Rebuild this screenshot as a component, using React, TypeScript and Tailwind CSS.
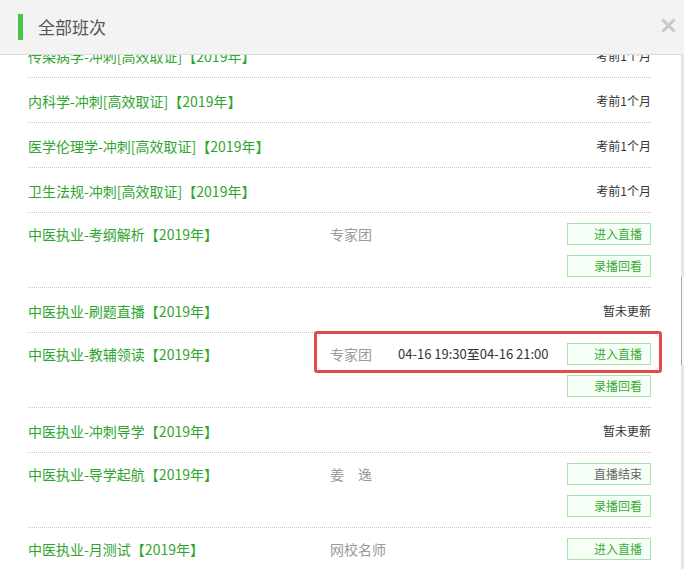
import React from 'react'

type Row = {
  title: string
  teacher?: string
  time?: string
  note?: string
  buttons?: string[]
}

const rows: Row[] = [
  { title: '传染病学-冲刺[高效取证]【2019年】', note: '考前1个月' },
  { title: '内科学-冲刺[高效取证]【2019年】', note: '考前1个月' },
  { title: '医学伦理学-冲刺[高效取证]【2019年】', note: '考前1个月' },
  { title: '卫生法规-冲刺[高效取证]【2019年】', note: '考前1个月' },
  { title: '中医执业-考纲解析【2019年】', teacher: '专家团', buttons: ['进入直播', '录播回看'] },
  { title: '中医执业-刷题直播【2019年】', note: '暂未更新' },
  {
    title: '中医执业-教辅领读【2019年】',
    teacher: '专家团',
    time: '04-16 19:30至04-16 21:00',
    buttons: ['进入直播', '录播回看'],
  },
  { title: '中医执业-冲刺导学【2019年】', note: '暂未更新' },
  { title: '中医执业-导学起航【2019年】', teacher: '姜　逸', buttons: ['直播结束', '录播回看'] },
  { title: '中医执业-月测试【2019年】', teacher: '网校名师', buttons: ['进入直播'] },
]

const LiveButton = ({ label }: { label: string }) => (
  <div
    className={`w-[84px] h-[22px] border border-[#a9e3a9] bg-[#f6fff6] text-right pr-[8px] text-[12px] leading-[20px] ${
      label === '直播结束' ? 'text-[#666]' : 'text-[#3aac3a]'
    }`}
  >
    {label}
  </div>
)

const ClassRow = ({ row }: { row: Row }) => {
  if (!row.buttons) {
    return (
      <div className="flex items-center h-[45px] border-b border-dotted border-[#c4c4c4]">
        <div className="flex-1 text-[14px] text-[#2ea52e] pt-[3px]">{row.title}</div>
        <div className="text-[12px] text-[#333] pt-[2px]">{row.note}</div>
      </div>
    )
  }
  return (
    <div className="flex items-start py-[10px] border-b border-dotted border-[#c4c4c4]">
      <div className="w-[302px] text-[14px] leading-[22px] text-[#2ea52e]">{row.title}</div>
      <div className="flex-1 flex items-center h-[22px]">
        <span className="text-[14px] text-[#999]">{row.teacher}</span>
        {row.time && <span className="ml-[26px] text-[13px] text-[#333]">{row.time}</span>}
      </div>
      <div className="flex flex-col gap-[10px]">
        {row.buttons.map((b) => (
          <LiveButton key={b} label={b} />
        ))}
      </div>
    </div>
  )
}

export default function App() {
  return (
    <div
      className="relative w-[684px] h-[569px] overflow-hidden bg-white"
      style={{ fontFamily: '"Noto Sans CJK SC", "Liberation Sans", sans-serif' }}
    >
      {/* header */}
      <div className="relative z-10 flex items-center h-[55px] bg-[#f3f3f3] border-b border-[#dcdcdc]">
        <div className="ml-[18px] w-[5px] h-[26px] bg-[#4cc44c]" />
        <div className="ml-[15px] text-[17px] text-[#555]">全部班次</div>
        <svg className="absolute left-[661px] top-[18px]" width="15" height="15" viewBox="0 0 15 15">
          <path d="M1.5 1.5 L13.5 13.5 M13.5 1.5 L1.5 13.5" stroke="#c9c9c9" strokeWidth="3" />
        </svg>
      </div>

      <div className="flex h-[514px]">
        <div className="flex-1 overflow-hidden pl-[28px] pr-[30px]">
          <div className="-mt-[22px]">
            {rows.map((r) => (
              <ClassRow key={r.title} row={r} />
            ))}
          </div>
        </div>
        {/* scrollbar */}
        <div className="w-[3px] bg-[#e6e6e6] flex flex-col">
          <div className="h-[222px]" />
          <div className="h-[88px] bg-[#f7f7f7] border-l border-[#a8a8a8]" />
        </div>
      </div>

      {/* annotation */}
      <div className="absolute left-[314px] top-[331px] w-[348px] h-[42px] border-[3px] border-[#e84848] rounded-[3px]" />
    </div>
  )
}
